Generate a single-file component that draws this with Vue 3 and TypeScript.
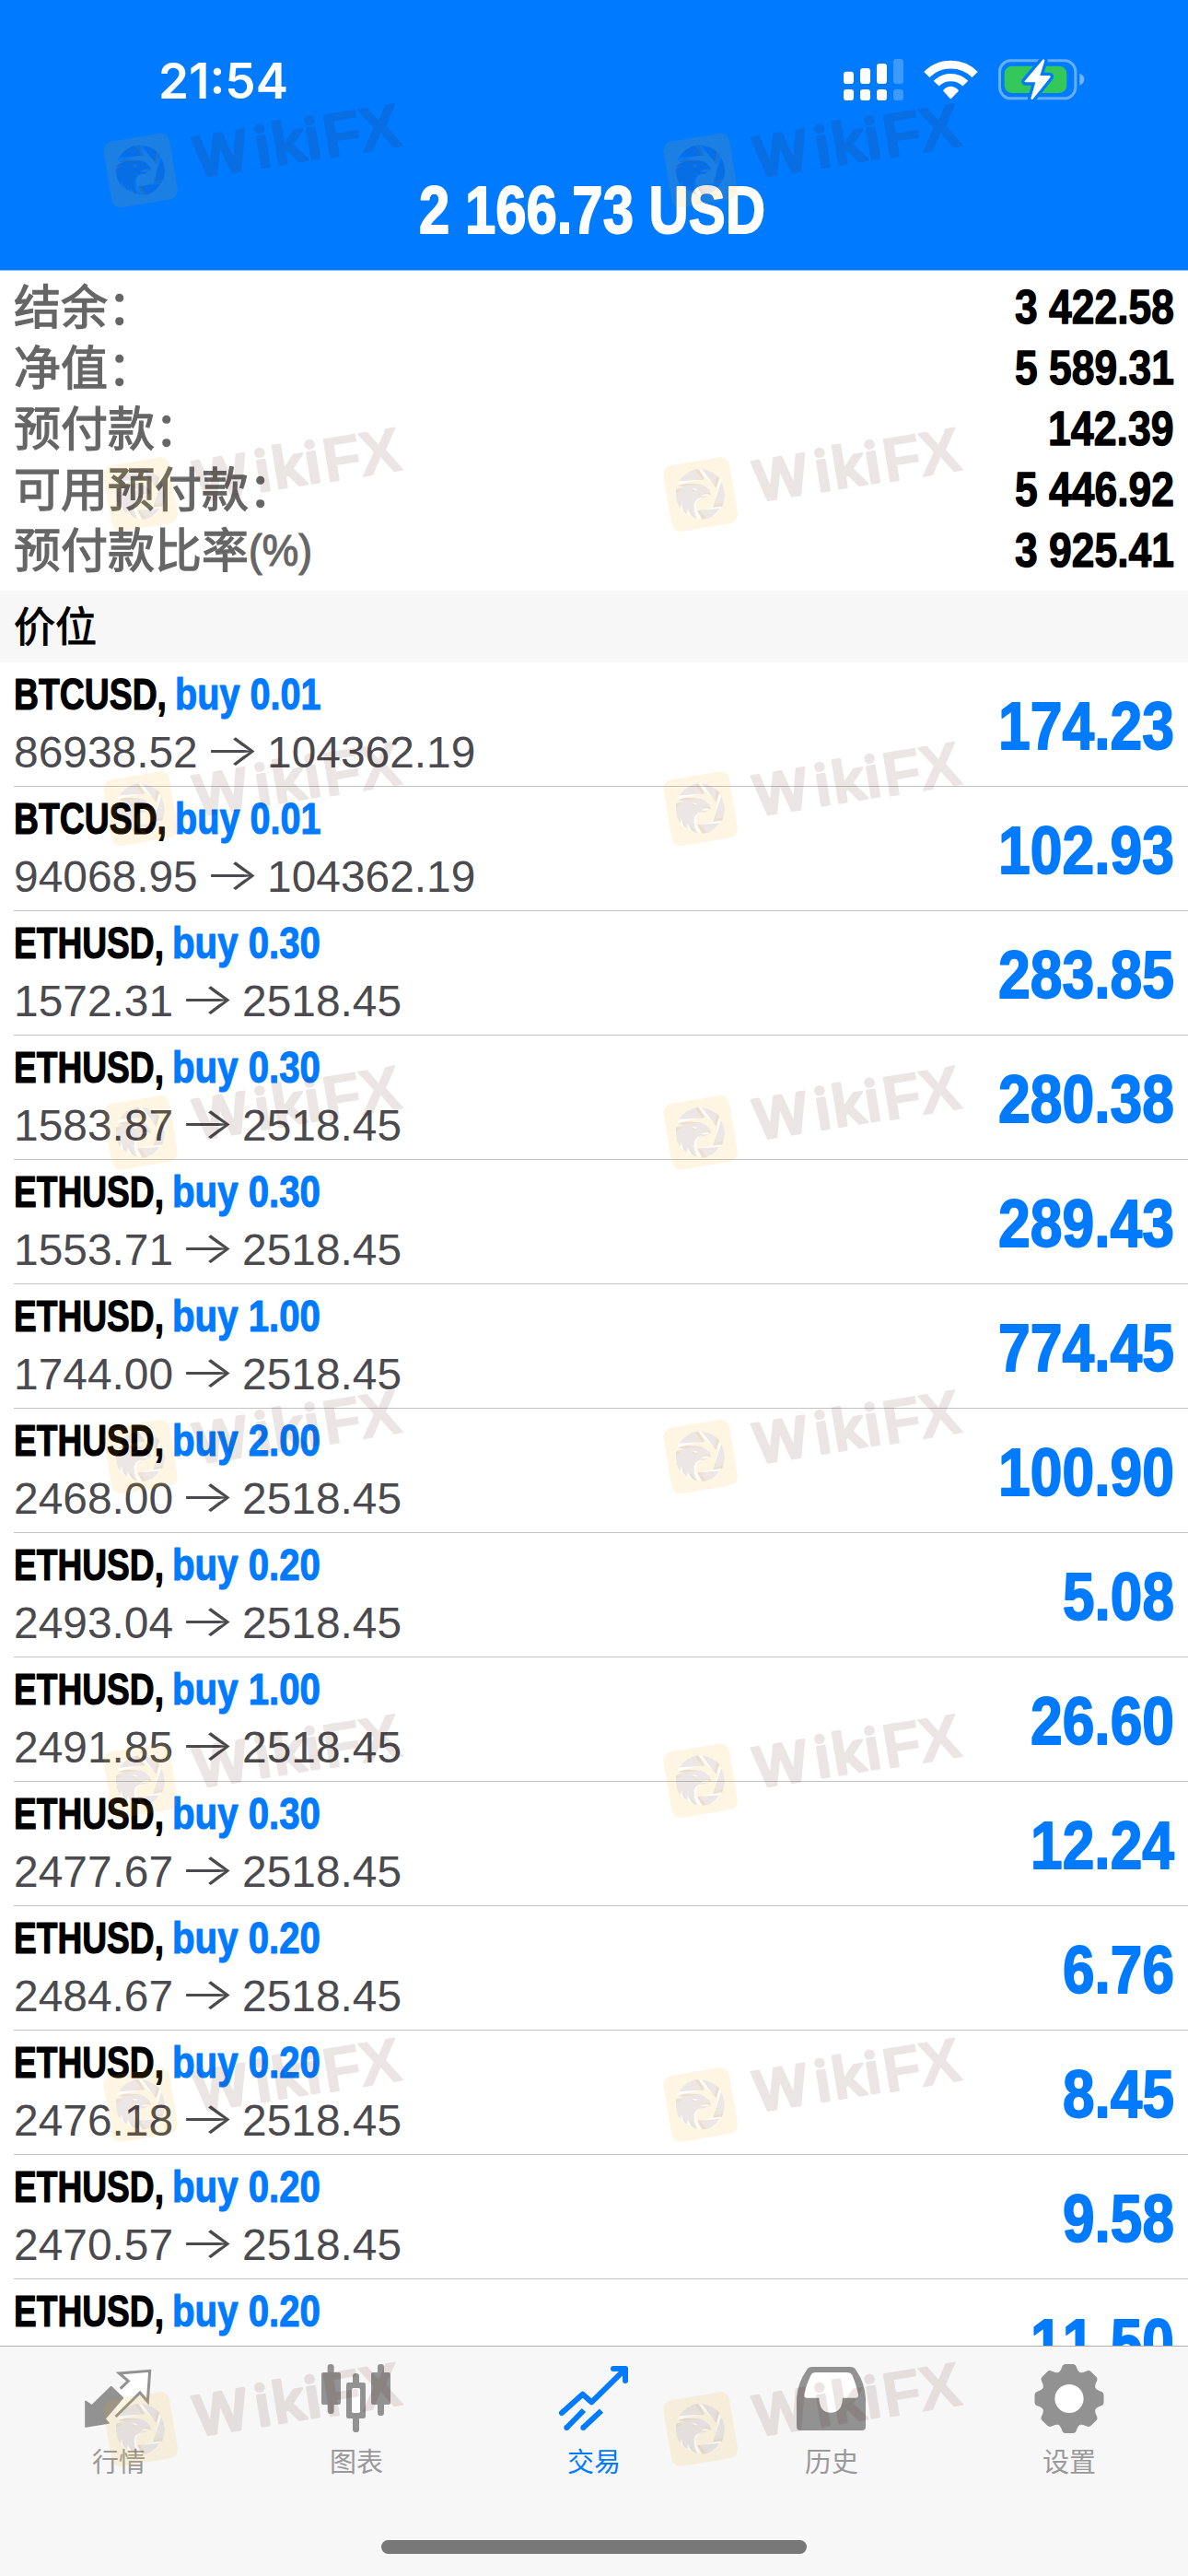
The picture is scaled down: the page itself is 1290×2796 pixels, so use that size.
<script setup lang="ts">
import { h } from 'vue'

// Glyph advances of the bold sans face, in em.
const ADVANCE: Record<string, number> = {
  ' ': 0.278, '.': 0.278, ',': 0.278, B: 0.722, T: 0.611, C: 0.722, U: 0.722, S: 0.667, D: 0.722,
  E: 0.667, H: 0.722, b: 0.611, u: 0.611, y: 0.556, '(': 0.333, ')': 0.333, '%': 0.889,
}

const natural = (s: string): number => [...s].reduce((sum, c) => sum + (ADVANCE[c] ?? 0.556), 0)

interface FitProps {
  text: string
  w: number
  h: number
  base: number
  size?: number
  bold?: number
}

// One line of text set to the width w. With a size it is condensed by a
// horizontal scale; without one the glyphs are spread over the width.
const FitText = (p: FitProps) =>
  h('svg', { width: p.w, height: p.h, style: 'display:block;overflow:visible;flex:none' }, [
    h(
      'text',
      {
        x: 0,
        y: p.base,
        ...(p.size
          ? { 'font-size': p.size, transform: `scale(${(p.w / (natural(p.text) * p.size)).toFixed(4)} 1)` }
          : { textLength: p.w, lengthAdjust: 'spacingAndGlyphs' }),
        fill: 'currentColor',
        stroke: p.bold ? 'currentColor' : 'none',
        'stroke-width': p.bold ?? 0,
        'stroke-linejoin': 'round',
      },
      p.text,
    ),
  ])
FitText.props = ['text', 'w', 'h', 'base', 'size', 'bold']

const condensed = (s: string, size: number): number =>
  [...s].reduce((sum, c) => sum + (c === '.' || c === ' ' ? 0.222 : 0.486), 0) * size

interface SummaryRow {
  label: string
  suffix?: string
  value: string
}

const summary: SummaryRow[] = [
  { label: '结余\uFF1A', value: '3 422.58' },
  { label: '净值\uFF1A', value: '5 589.31' },
  { label: '预付款\uFF1A', value: '142.39' },
  { label: '可用预付款\uFF1A', value: '5 446.92' },
  { label: '预付款比率', suffix: '(%)', value: '3 925.41' },
]

interface Position {
  symbol: string
  lots: string
  open: string
  now: string
  profit: string
}

const row = (symbol: string, lots: string, open: string, now: string, profit: string): Position => ({
  symbol, lots, open, now, profit,
})

const positions: Position[] = [
  row('BTCUSD,', '0.01', '86938.52', '104362.19', '174.23'),
  row('BTCUSD,', '0.01', '94068.95', '104362.19', '102.93'),
  row('ETHUSD,', '0.30', '1572.31', '2518.45', '283.85'),
  row('ETHUSD,', '0.30', '1583.87', '2518.45', '280.38'),
  row('ETHUSD,', '0.30', '1553.71', '2518.45', '289.43'),
  row('ETHUSD,', '1.00', '1744.00', '2518.45', '774.45'),
  row('ETHUSD,', '2.00', '2468.00', '2518.45', '100.90'),
  row('ETHUSD,', '0.20', '2493.04', '2518.45', '5.08'),
  row('ETHUSD,', '1.00', '2491.85', '2518.45', '26.60'),
  row('ETHUSD,', '0.30', '2477.67', '2518.45', '12.24'),
  row('ETHUSD,', '0.20', '2484.67', '2518.45', '6.76'),
  row('ETHUSD,', '0.20', '2476.18', '2518.45', '8.45'),
  row('ETHUSD,', '0.20', '2470.57', '2518.45', '9.58'),
]

const marks = [144, 495.7, 836.8, 1188.4, 1540.1, 1891.8, 2243.5, 2595.7].flatMap((y) => [
  { x: 112, y },
  { x: 720, y },
])
</script>

<template>
  <div class="screen">
    <header class="top">
      <div class="status">
        <FitText class="clock" text="21:54" :w="141" :h="62" :base="52" />
        <svg class="status-icons" width="280" height="62" viewBox="0 0 840 186">
          <g fill="#fff">
            <rect x="33" y="68" width="33" height="40" rx="10" />
            <rect x="87" y="57" width="33" height="51" rx="10" />
            <rect x="141" y="42" width="33" height="66" rx="10" />
            <rect x="33" y="126" width="33" height="36" rx="10" />
            <rect x="87" y="126" width="33" height="36" rx="10" />
            <rect x="141" y="126" width="33" height="36" rx="10" />
            <g opacity=".24">
              <rect x="195" y="27" width="33" height="81" rx="10" />
              <rect x="195" y="126" width="33" height="36" rx="10" />
            </g>
            <path d="M382 153 L361 130 Q382 110 404 130 Z" stroke="#fff" stroke-width="7" stroke-linejoin="round" />
          </g>
          <g fill="none" stroke="#fff">
            <path d="M304 78 A111 111 0 0 1 461 78" stroke-width="26" />
            <path d="M335 107 A67 67 0 0 1 430 107" stroke-width="25" />
          </g>
          <rect x="541.5" y="32.5" width="247" height="123" rx="36" fill="none" stroke="#fff" stroke-opacity=".4" stroke-width="9" />
          <rect x="557" y="50" width="203" height="88" rx="25" fill="#34c759" />
          <path d="M802 74 Q817 80 817 93 Q817 107 802 113 Z" fill="#fff" opacity=".45" />
          <path d="M682 29 L623 99 Q621 103 626 103 H658 L643 155 Q645 162 651 156 L707 86 Q708 81 703 81 H673 L688 32 Q686 26 682 29 Z" fill="#fff" stroke="#007aff" stroke-width="20" paint-order="stroke" stroke-linejoin="round" />
        </svg>
      </div>
      <FitText class="total" text="2 166.73 USD" :w="376" :h="80" :base="58" :size="72" :bold="1.8" />
    </header>

    <section class="summary">
      <div v-for="s in summary" :key="s.label" class="sum-row">
        <div class="sum-label">
          <span>{{ s.label }}</span>
          <FitText v-if="s.suffix" class="suffix" :text="s.suffix" :w="69" :h="66" :base="50" :size="48" :bold="1.2" />
        </div>
        <FitText class="sum-value" :text="s.value" :w="condensed(s.value, 51.5)" :h="66" :base="51" :size="51.5" :bold="1.3" />
      </div>
    </section>

    <div class="section-head">价位</div>

    <main class="list">
      <div v-for="(p, i) in positions" :key="i" class="pos">
        <div class="pos-info">
          <div class="line">
            <FitText class="title" :text="p.symbol" :w="p.symbol[0] === 'B' ? 166 : 163" :h="64" :base="51" :size="48" :bold="1.2" />
            <FitText class="title side" :text="`buy ${p.lots}`" :w="p.symbol[0] === 'B' ? 158.5 : 161" :h="64" :base="51" :size="48" :bold="1.1" />
          </div>
          <div class="line detail">
            <FitText :text="p.open" :w="natural(p.open) * 47.9" :h="70" :base="50" :size="47.9" />
            <FitText class="arrow" text="→" :w="62" :h="70" :base="48" />
            <FitText :text="p.now" :w="natural(p.now) * 47.9" :h="70" :base="50" :size="47.9" />
          </div>
        </div>
        <FitText class="profit" :text="p.profit" :w="condensed(p.profit, 72)" :h="134" :base="94" :size="72" :bold="1.8" />
      </div>
      <div class="pos">
        <div class="line">
          <FitText class="title" text="ETHUSD," :w="163" :h="64" :base="51" :size="48" :bold="1.2" />
          <FitText class="title side" text="buy 0.20" :w="161" :h="64" :base="51" :size="48" :bold="1.1" />
        </div>
        <FitText class="profit" text="11.50" :w="condensed('11.50', 72)" :h="134" :base="94" :size="72" :bold="1.8" />
      </div>
    </main>

    <nav class="tabs">
      <div class="tab-row">
        <div class="tab">
          <svg width="90" height="80" viewBox="72 66 270 240">
            <path d="M197 250 L276 170 L301 200 L308 100 L208 108 L238 133 L212 160 Z" fill="#fff" />
            <path d="M197 249 L276 171 L301 200 L308 100 L208 108 L238 133 L212 158" fill="none" stroke="#929292" stroke-width="9" />
            <path d="M99 199 L119 213 L182 152 L220 188 L162 256 L174 270 L99 282 Z" fill="#929292" stroke="#929292" stroke-width="5" stroke-linejoin="round" />
          </svg>
          <span>行情</span>
        </div>
        <div class="tab">
          <svg width="90" height="80" viewBox="846 66 270 240" fill="#929292">
            <rect x="887" y="78" width="21" height="162" rx="10" />
            <rect x="867" y="105" width="63" height="105" rx="6" />
            <rect x="969" y="108" width="21" height="192" rx="10" />
            <rect x="948" y="138" width="63" height="117" rx="7" />
            <rect x="966" y="156" width="27" height="81" rx="5" fill="#fff" />
            <rect x="1050" y="78" width="21" height="168" rx="10" />
            <rect x="1029" y="105" width="63" height="105" rx="6" />
          </svg>
          <span>图表</span>
        </div>
        <div class="tab active">
          <svg width="90" height="80" viewBox="60 66 270 240" fill="none" stroke="#007aff" stroke-width="18">
            <path d="M90 237 L158 176 L187 202 L296 95" stroke-linejoin="round" stroke-linecap="round" />
            <path d="M258 93 H297 V132" stroke-linecap="round" stroke-linejoin="round" />
            <path d="M106 285 L162 228 M160 285 L219 230" />
            <g fill="#007aff" stroke="none">
              <circle cx="106" cy="285" r="9" />
              <circle cx="160" cy="285" r="9" />
            </g>
          </svg>
          <span>交易</span>
        </div>
        <div class="tab">
          <svg width="90" height="80" viewBox="834 66 270 240">
            <path d="M888 97 Q894 87 906 87 H1030 Q1042 87 1048 97 Q1078 140 1080 190 V282 Q1080 294 1068 294 H867 Q855 294 855 282 V190 Q858 140 888 97 Z" fill="#929292" />
            <path d="M902 113 Q906 105 917 105 H1020 Q1031 105 1036 113 Q1048 140 1056 176 Q1057 188 1047 188 H1005 Q1003 236 966 236 Q930 236 928 188 H889 Q878 188 880 176 Q888 140 902 113 Z" fill="#fff" />
          </svg>
          <span>历史</span>
        </div>
        <div class="tab">
          <svg width="90" height="80" viewBox="-45 -41.5 90 80">
            <g fill="#929292">
              <circle r="30.5" />
              <path v-for="n in 8" :key="n" :transform="`rotate(${n * 45})`" d="M-14 -26 Q-9 -30 -8 -34 Q-7 -37.5 -4 -37.5 H4 Q7 -37.5 8 -34 Q9 -30 14 -26 Z" />
            </g>
            <circle r="15.6" fill="#fff" />
          </svg>
          <span>设置</span>
        </div>
      </div>
      <div class="home"></div>
    </nav>

    <svg class="marks" width="1290" height="2796" viewBox="0 0 1290 2796">
      <defs>
        <mask id="emblem-cut" maskUnits="userSpaceOnUse" x="0" y="0" width="300" height="285">
          <rect width="300" height="285" fill="#fff" />
          <use href="#emblem" fill="#000" />
        </mask>
        <path id="emblem" fill-rule="evenodd" d="M76 96 Q100 60 140 56 L160 90 Z M150 57 Q186 62 208 86 L197 118 Z M213 98 Q235 140 216 178 L187 182 Z M135 191 L208 185 Q185 220 152 220 Z M66 122 L92 112 L74 112 Q84 103 106 103 L134 105 Q160 107 170 120 Q180 126 179 142 Q172 135 160 137 L146 142 Q160 146 170 144 Q162 152 148 150 Q132 152 126 168 Q121 190 136 218 Q112 212 104 186 L103 203 Q86 194 84 170 L80 186 Q64 164 66 122 Z M118 119 L137 122 Q130 130 124 124 Z" />
        <g id="mark">
          <g transform="scale(.3333) translate(-24 -16)">
            <rect x="37" y="30" width="218" height="218" rx="30" transform="rotate(-9.5 146 139)" fill="rgb(250,175,0)" fill-opacity=".11" mask="url(#emblem-cut)" />
            <use href="#emblem" fill="rgb(70,10,0)" fill-opacity=".1" />
          </g>
          <g class="mark-text" opacity=".1" transform="translate(102 50) rotate(-9.3)">
            <text class="round" x="1 67 86 122" y="-1">Wiki</text>
            <text class="block" x="142 182" y="1">FX</text>
          </g>
        </g>
      </defs>
      <use v-for="(m, i) in marks" :key="i" href="#mark" :x="m.x" :y="m.y" />
    </svg>
  </div>
</template>

<style>
body {
  margin: 0;
  background: #fff;
}
</style>

<style scoped>
.screen {
  position: relative;
  width: 1290px;
  height: 2796px;
  overflow: hidden;
  background: #fff;
  display: flex;
  flex-direction: column;
  font-family: "Liberation Sans", "Noto Sans CJK SC", sans-serif;
  font-kerning: none;
}
.top {
  height: 293px;
  flex: none;
  background: #007aff;
  border-bottom: 1px solid #8fc0f0;
  color: #fff;
  display: flex;
  flex-direction: column;
  align-items: center;
}
.status {
  box-sizing: border-box;
  width: 100%;
  height: 195px;
  padding: 55px 105px 0 172px;
  display: flex;
  justify-content: space-between;
  align-items: flex-start;
}
.clock {
  font: 600 53px Inter, sans-serif;
}
.total {
  margin-right: 5px;
  font-weight: 700;
}
.summary {
  box-sizing: border-box;
  height: 347px;
  flex: none;
  padding: 6px 15px 0;
}
.sum-row {
  height: 66px;
  display: flex;
  justify-content: space-between;
}
.sum-label {
  height: 66px;
  display: flex;
  font: 400 51px/60px "Noto Sans CJK SC", sans-serif;
  -webkit-text-stroke: 1.3px #666;
  color: #666;
}
.suffix {
  font-family: "Liberation Sans", sans-serif;
}
.sum-value {
  font-weight: 700;
  color: #000;
}
.section-head {
  box-sizing: border-box;
  height: 78px;
  flex: none;
  padding-left: 15px;
  background: #f7f7f7;
  font: 400 45px/74px "Noto Sans CJK SC", sans-serif;
  -webkit-text-stroke: 1px #000;
  color: #000;
}
.list {
  height: 1827px;
  flex: none;
  overflow: hidden;
}
.pos {
  box-sizing: border-box;
  height: 135px;
  margin-left: 15px;
  padding-right: 15px;
  border-bottom: 1px solid #c2c2c5;
  display: flex;
  justify-content: space-between;
}
.line {
  display: flex;
}
.title {
  font-weight: 700;
  color: #000;
}
.side {
  margin-left: 9px;
  color: #007aff;
}
.detail {
  font-size: 47.7px;
  color: #4a4a4f;
}
.arrow {
  font-family: Inter, sans-serif;
  font-weight: 300;
  margin: 0 7px 0 6px;
}
.profit {
  font-weight: 700;
  color: #007aff;
}
.tabs {
  box-sizing: border-box;
  height: 250px;
  flex: none;
  border-top: 1px solid #b0b0b0;
  background: #f7f7f7;
  display: flex;
  flex-direction: column;
  align-items: center;
  justify-content: space-between;
  padding: 15px 0 24px;
}
.tab-row {
  width: 100%;
  display: flex;
}
.tab {
  flex: 1;
  display: flex;
  flex-direction: column;
  align-items: center;
  font: 400 29px/42px "Noto Sans CJK SC", sans-serif;
  color: #999;
}
.tab svg {
  margin-bottom: 7px;
}
.active {
  color: #007aff;
}
.home {
  width: 462px;
  height: 15px;
  border-radius: 8px;
  background: #787878;
}
.marks {
  position: absolute;
  left: 0;
  top: 0;
  pointer-events: none;
}
.mark-text {
  fill: rgb(70, 10, 0);
  stroke: rgb(70, 10, 0);
  stroke-linejoin: round;
}
.round {
  font: 600 61px "Noto Sans", "Open Sans", sans-serif;
  stroke-width: 3px;
}
.block {
  font: 700 68px "Liberation Sans", sans-serif;
  stroke-width: 1px;
}
</style>
